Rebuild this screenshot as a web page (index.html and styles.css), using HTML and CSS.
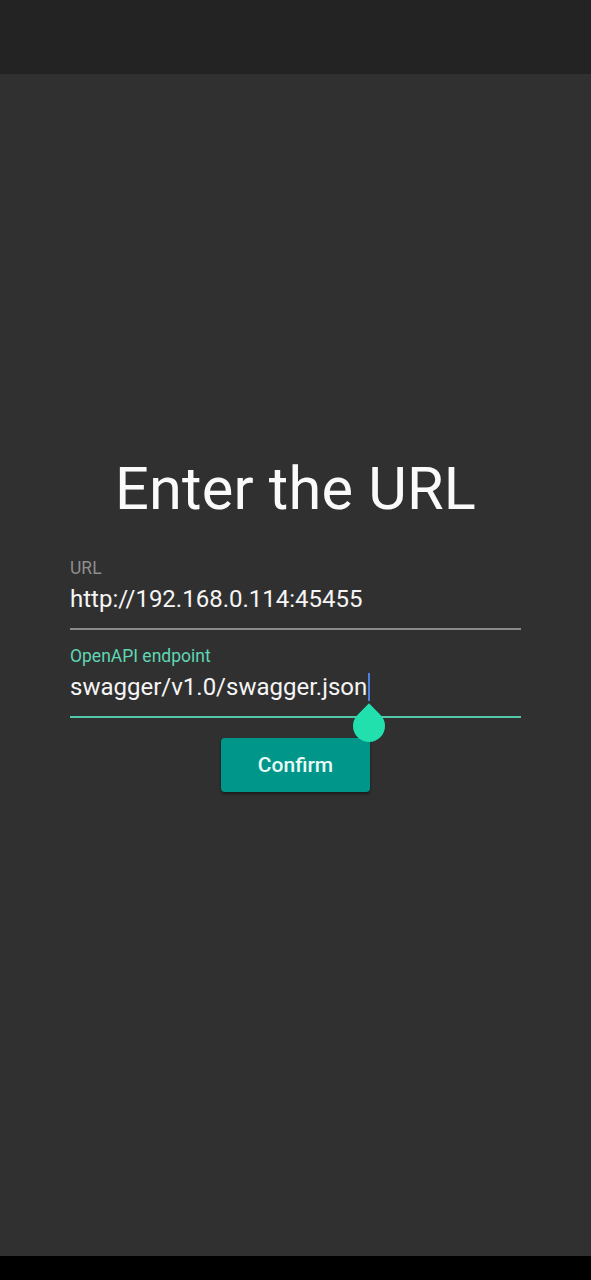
FILE: index.html
```html
<!DOCTYPE html>
<html>
<head>
<meta charset="utf-8">
<link rel="stylesheet" href="styles.css">
</head>
<body>
<div class="screen">
  <div class="status-bar"></div>
  <main class="content">
    <h1 class="title">Enter the URL</h1>
    <div class="field first">
      <label class="label">URL</label>
      <div class="value">http://192.168.0.114:45455</div>
      <div class="underline"></div>
    </div>
    <div class="field focused">
      <label class="label">OpenAPI endpoint</label>
      <div class="value">swagger/v1.0/swagger.json<span class="cursor"><span class="handle"></span></span></div>
      <div class="underline"></div>
    </div>
    <div class="actions">
      <button class="btn">Confirm</button>
    </div>
  </main>
  <div class="nav-bar"></div>
</div>
</body>
</html>
```
FILE: styles.css
```css
* { box-sizing: border-box; }
html, body { margin: 0; padding: 0; background: #303030; }
body { font-family: Roboto, "Noto Sans", sans-serif; color: #fff; }
.screen { width: 591px; height: 1280px; display: flex; flex-direction: column; background: #303030; }
.status-bar { height: 74px; background: #232323; flex: none; }
.content { flex: 1; display: flex; flex-direction: column; padding: 380px 70px 0 70px; }
.title { margin: 0; font-weight: 400; font-size: 59.5px; line-height: 70px; text-align: center; color: #fafafa; letter-spacing: 0.2px; }
.field { display: flex; flex-direction: column; }
.field.first { margin-top: 34px; }
.label { font-size: 17.5px; line-height: 20px; color: #8e8e8e; }
.value { font-size: 24px; line-height: 28px; color: #f5f5f5; margin-top: 7px; position: relative; white-space: nowrap; }
.underline { height: 2px; background: #8a8a8a; margin-top: 15px; }
.field.focused { margin-top: 16px; }
.field.focused .label { color: #5fd6b4; }
.field.focused .underline { background: #52c7aa; }
.cursor { display: inline-block; position: relative; width: 2px; height: 28px; background: #4f7fe0; vertical-align: top; margin-left: 1px; }
.handle { position: absolute; left: -15px; top: 37px; width: 32px; height: 32px; background: #22dfae; border-radius: 0 50% 50% 50%; transform: rotate(45deg); }
.actions { display: flex; justify-content: center; margin-top: 20px; }
.btn { width: 149px; height: 54px; background: #00978a; color: #eafaf6; border: none; border-radius: 4px; font-family: Roboto, sans-serif; font-weight: 500; font-size: 21px; box-shadow: 0 2px 3px rgba(0,0,0,0.45); }
.nav-bar { height: 24px; background: #000; flex: none; }
```
